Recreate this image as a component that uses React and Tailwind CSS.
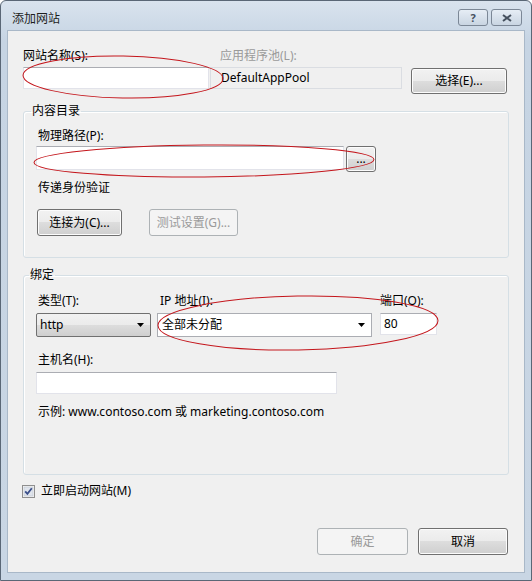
import React from "react";

const font = "font-['Noto_Sans','Noto_Sans_CJK_SC',sans-serif]";

const Button = ({ children, disabled, className = "" }) => (
  <div
    className={
      "flex items-center justify-center rounded-[3px] border text-[12px] " +
      (disabled
        ? "border-[#adb2b5] bg-[#f4f4f4] text-[#9a9a9a] "
        : "border-[#707070] bg-[linear-gradient(#f2f2f2_0%,#ebebeb_50%,#dddddd_50%,#cfcfcf_100%)] text-black shadow-[inset_0_0_0_1px_#fcfcfc] ") +
      className
    }
  >
    {children}
  </div>
);

const TextBox = ({ children, className = "" }) => (
  <div
    className={
      "flex items-center border border-[#e2e3ea] border-t-[#abadb3] bg-white px-[3px] text-[12px] " +
      className
    }
  >
    {children}
  </div>
);

const Arrow = () => (
  <svg width="8" height="5" viewBox="0 0 8 5" className="ml-auto mr-[5px]">
    <path d="M0 0h7L3.5 4z" fill="#000" />
  </svg>
);

const Field = ({ legend, className = "", children }) => (
  <fieldset
    className={
      "ml-[15px] w-[486px] rounded-[3px] border border-[#d5dfe5] shadow-[inset_1px_1px_0_#fff] " +
      className
    }
  >
    <legend className="px-[1px] text-[12px] leading-[14px]">{legend}</legend>
    <div className="px-[12px]">{children}</div>
  </fieldset>
);

export default function App() {
  return (
    <div
      className={
        "relative h-[581px] w-[532px] rounded-t-[6px] border border-[#5a6776] bg-[linear-gradient(#d9e3ee,#c6d4e3_40px,#c9d6e4)] text-black " +
        font
      }
    >
      <div className="flex h-[29px] items-start pl-[11px] pr-[9px]">
        <span className="mt-[11px] text-[12px] leading-[14px] text-[#1e1e1e]">添加网站</span>
        <div className="ml-auto mt-[8px] flex gap-[3px]">
          <div className="flex h-[17px] w-[30px] items-center justify-center rounded-[3px] border border-[#7b8796] bg-[linear-gradient(#e6edf5,#c9d5e2)] text-[11px] font-bold leading-none text-[#45505e]">
            ?
          </div>
          <div className="flex h-[17px] w-[31px] items-center justify-center rounded-[3px] border border-[#7b8796] bg-[linear-gradient(#e6edf5,#c9d5e2)]">
            <svg width="10" height="8" viewBox="0 0 10 8">
              <path d="M1 1l8 6M9 1L1 7" stroke="#45505e" strokeWidth="2" />
            </svg>
          </div>
        </div>
      </div>

      <div className="mx-[6px] h-[543px] border border-[#a9b8c8] bg-[#f0f0f0] text-[12px]">
        <div className="ml-[15px] mt-[18px] flex h-[14px] items-center leading-[14px]">
          <span className="w-[197px]">网站名称(S):</span>
          <span className="text-[#9a9a9a]">应用程序池(L):</span>
        </div>
        <div className="ml-[15px] mt-[4px] flex items-start">
          <TextBox className="h-[22px] w-[186px]" />
          <div className="ml-[1px] flex h-[22px] w-[192px] items-center border border-[#dadde2] bg-[#f0f0f0] pl-[10px]">
            DefaultAppPool
          </div>
          <Button className="ml-[9px] mt-[1px] h-[26px] w-[96px]">选择(E)...</Button>
        </div>

        <Field legend="内容目录" className="mt-[10px] h-[154px] [&>legend]:ml-[7px]">
          <div className="ml-[2px] mt-[11px] h-[14px] leading-[14px]">物理路径(P):</div>
          <div className="mt-[3px] flex items-start">
            <TextBox className="h-[24px] w-[308px]" />
            <Button className="ml-[2px] h-[26px] w-[30px] leading-none">...</Button>
          </div>
          <div className="ml-[2px] mt-[9px] h-[14px] leading-[14px]">传递身份验证</div>
          <div className="mt-[14px] flex">
            <Button className="ml-[1px] h-[27px] w-[85px]">连接为(C)...</Button>
            <Button disabled className="ml-[27px] h-[27px] w-[89px]">
              测试设置(G)...
            </Button>
          </div>
        </Field>

        <Field legend="绑定" className="mt-[10px] h-[207px] [&>legend]:ml-[5px]">
          <div className="ml-[2px] mt-[12px] flex h-[14px] leading-[14px]">
            <span className="w-[122px]">类型(T):</span>
            <span className="w-[220px]">IP 地址(I):</span>
            <span>端口(O):</span>
          </div>
          <div className="mt-[5px] flex items-start">
            <div className="flex h-[24px] w-[115px] items-center rounded-[2px] border border-[#707070] bg-[linear-gradient(#f2f2f2_0%,#ebebeb_50%,#dddddd_50%,#cfcfcf_100%)] pl-[3px]">
              http
              <Arrow />
            </div>
            <div className="ml-[6px] flex h-[24px] w-[215px] items-center border border-[#abadb3] bg-white pl-[4px]">
              全部未分配
              <Arrow />
            </div>
            <TextBox className="ml-[8px] h-[22px] w-[57px]">80</TextBox>
          </div>
          <div className="ml-[2px] mt-[16px] h-[14px] leading-[14px]">主机名(H):</div>
          <TextBox className="mt-[5px] h-[22px] w-[301px]" />
          <div className="ml-[2px] mt-[11px] h-[14px] leading-[14px]">
            示例: www.contoso.com 或 marketing.contoso.com
          </div>
        </Field>

        <div className="ml-[14px] mt-[9px] flex h-[14px] items-center gap-[6px] leading-[14px]">
          <svg width="13" height="13" viewBox="0 0 13 13">
            <rect x="0.5" y="0.5" width="12" height="12" fill="#f4f4f4" stroke="#8f8f8f" />
            <rect x="2" y="2" width="9" height="9" fill="#dfe4ec" stroke="#b7bfcb" strokeWidth="0.5" />
            <path d="M3.2 6.3l2.2 2.6 4.4-5.6" fill="none" stroke="#3b4f8a" strokeWidth="1.8" />
          </svg>
          <span>立即启动网站(M)</span>
        </div>

        <div className="mr-[16px] mt-[30px] flex justify-end gap-[10px]">
          <Button disabled className="h-[27px] w-[91px]">确定</Button>
          <Button className="h-[27px] w-[90px]">取消</Button>
        </div>
      </div>

      <svg
        className="pointer-events-none absolute left-0 top-0"
        width="532"
        height="581"
        viewBox="0 0 532 581"
      >
        <g fill="none" stroke="#c4161c" strokeWidth="1">
          <ellipse cx="122" cy="76" rx="100" ry="21" transform="rotate(1 122 76)" />
          <ellipse cx="203" cy="160" rx="170" ry="16" transform="rotate(-0.5 203 160)" />
          <ellipse cx="297" cy="322" rx="140" ry="27" transform="rotate(-1 297 322)" />
        </g>
      </svg>
    </div>
  );
}
